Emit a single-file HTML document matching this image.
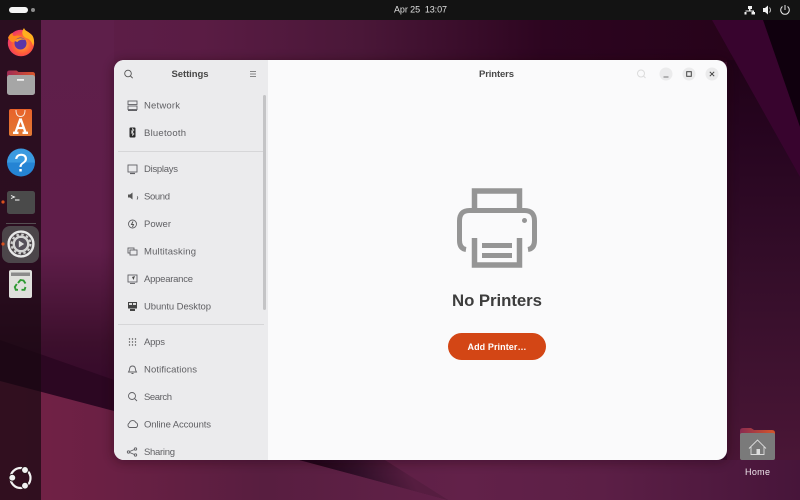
<!DOCTYPE html>
<html><head><meta charset="utf-8"><style>
html,body{margin:0;padding:0;width:800px;height:500px;overflow:hidden;background:#000}
svg{display:block;filter:blur(.3px)}
text{font-family:"Liberation Sans",sans-serif}
.r{font-size:9.5px;fill:#606064}
.i{fill:none;stroke:#606064;stroke-width:.9}
</style></head><body>
<svg width="800" height="500" viewBox="0 0 800 500" xmlns="http://www.w3.org/2000/svg">
<defs>
<linearGradient id="top" x1="0" x2="800" y1="0" y2="0" gradientUnits="userSpaceOnUse"><stop offset="0" stop-color="#5e1f4a"/><stop offset=".25" stop-color="#5a1c44"/><stop offset=".45" stop-color="#4a1738"/><stop offset=".68" stop-color="#2d0520"/><stop offset="1" stop-color="#240218"/></linearGradient>
<linearGradient id="left" x1="0" x2="0" y1="20" y2="400" gradientUnits="userSpaceOnUse"><stop offset="0" stop-color="#5e1f4a"/><stop offset=".6" stop-color="#601e4a"/><stop offset=".85" stop-color="#3c0f2c"/><stop offset="1" stop-color="#33082a"/></linearGradient>
<linearGradient id="right" x1="0" x2="0" y1="60" y2="460" gradientUnits="userSpaceOnUse"><stop offset="0" stop-color="#200218"/><stop offset=".2" stop-color="#270520"/><stop offset=".55" stop-color="#350e2a"/><stop offset="1" stop-color="#4a1636"/></linearGradient>
<linearGradient id="low" x1="0" x2="800" y1="0" y2="0" gradientUnits="userSpaceOnUse"><stop offset="0" stop-color="#742246"/><stop offset=".14" stop-color="#6a2044"/><stop offset=".33" stop-color="#581e40"/><stop offset=".58" stop-color="#622149"/><stop offset=".75" stop-color="#5c1f46"/><stop offset="1" stop-color="#47153a"/></linearGradient>
<linearGradient id="wedge" x1="330" x2="400" y1="490" y2="455" gradientUnits="userSpaceOnUse"><stop offset="0" stop-color="#22051a"/><stop offset=".45" stop-color="#33102a"/><stop offset="1" stop-color="#561d40"/></linearGradient>
<radialGradient id="ff" cx=".55" cy=".55" r=".6"><stop offset="0" stop-color="#ffb02e"/><stop offset=".6" stop-color="#ff5a3a"/><stop offset="1" stop-color="#e92f78"/></radialGradient>
<linearGradient id="fold" x1="0" x2="1" y1="0" y2="0"><stop offset="0" stop-color="#a02a55"/><stop offset="1" stop-color="#d9562c"/></linearGradient>
<linearGradient id="foldh" x1="0" x2="1" y1="0" y2="0"><stop offset="0" stop-color="#8a2a50"/><stop offset="1" stop-color="#d5562b"/></linearGradient>
<linearGradient id="help" x1="0" x2="0" y1="0" y2="1"><stop offset="0" stop-color="#3a9ae0"/><stop offset=".5" stop-color="#3a9ae0"/><stop offset=".5" stop-color="#2584d4"/><stop offset="1" stop-color="#2584d4"/></linearGradient>
<linearGradient id="store" x1="0" x2="0" y1="0" y2="1"><stop offset="0" stop-color="#e8622a"/><stop offset="1" stop-color="#e27a35"/></linearGradient>
<filter id="sh" x="-10%" y="-10%" width="120%" height="120%"><feGaussianBlur stdDeviation="5"/></filter>
<clipPath id="win"><rect x="114" y="60" width="613" height="400" rx="10"/></clipPath>
</defs>

<!-- wallpaper -->
<rect width="800" height="500" fill="#3a0e2c"/>
<rect x="0" y="20" width="120" height="400" fill="url(#left)"/>
<rect x="114" y="20" width="686" height="42" fill="url(#top)"/>
<rect x="0" y="20" width="114" height="42" fill="url(#left)"/>
<rect x="727" y="60" width="73" height="400" fill="url(#right)"/>
<polygon points="763,20 800,20 800,127" fill="#10000e"/>
<polygon points="712,20 763,20 800,127 800,177" fill="#38042e"/>
<polygon points="0,340 114,380 448,500 0,500" fill="#2c0722"/>
<polygon points="0,381 114,411 300,460 448,500 0,500" fill="url(#low)"/>
<polygon points="448,500 300,460 800,460 800,500" fill="url(#low)"/>
<polygon points="299,460 385,460 448,500" fill="url(#wedge)"/>

<!-- dock -->
<rect x="0" y="20" width="41" height="480" fill="#170811" fill-opacity=".72"/>
<rect x="2" y="226" width="37" height="37" rx="8" fill="#4c464a"/>
<rect x="6" y="223" width="30" height="1" fill="#554e52"/>
<circle cx="3" cy="202" r="1.6" fill="#d9501e"/>
<circle cx="3" cy="244" r="1.6" fill="#d9501e"/>

<!-- firefox -->
<circle cx="21" cy="43" r="13.2" fill="url(#ff)"/>
<path d="M24 28c1 3 5 4 8 7 3 4 2 9 1 11-1-4-3-7-7-8-4-2-5-6-2-10z" fill="#ffb01f"/>
<path d="M8 38c1-3 3-5 5-5-1 2 0 3 2 3 3-1 6 0 8 2-4-1-8 1-9 4-2 1-4-1-6-4z" fill="#ff8a1e"/>
<circle cx="20.500" cy="43.500" r="6" fill="#5b35a8"/>
<path d="M14.500 41c2-3 8-4 11-1-3-1-7 0-8 2z" fill="#ff9a28"/>

<!-- files -->
<path d="M7 73q0-2.500 2.500-2.500h7l2 1.500h14q2.500 0 2.500 2.500v3H7z" fill="url(#fold)"/>
<rect x="7" y="75" width="28" height="20" rx="2.500" fill="#a6a6a6"/>
<rect x="17" y="79" width="7" height="1.800" fill="#efefef"/>

<!-- store -->
<rect x="9" y="109" width="23" height="27" rx="2" fill="url(#store)"/>
<path d="M16 110c0 5 2 6.500 4.500 6.500S25 115 25 110" fill="none" stroke="#f8e5da" stroke-width="1"/>
<path d="M20.500 118.500l-5 14M20.500 118.500l5 14M16.500 128h8M13 132.800h5.500M22.500 132.800h5.500" fill="none" stroke="#fff" stroke-width="2.300"/>

<!-- help -->
<circle cx="21" cy="162.500" r="14" fill="url(#help)"/>
<text x="21" y="171.500" font-size="25" fill="#fff" text-anchor="middle">?</text>

<!-- terminal -->
<rect x="7" y="191" width="28" height="23" rx="2.500" fill="#4a4a4a"/>
<path d="M11 195.500l3.500 1.500-3.500 1.500" fill="none" stroke="#fff" stroke-width=".9"/>
<rect x="15" y="199.500" width="4.500" height="1" fill="#fff"/>

<!-- gear -->
<circle cx="21" cy="244" r="12.400" fill="none" stroke="#e8e8e8" stroke-width="2.400"/>
<circle cx="21" cy="244" r="9.500" fill="none" stroke="#cfcfcf" stroke-width="2" stroke-dasharray="2.500 2.470"/>
<circle cx="21" cy="244" r="7.200" fill="none" stroke="#d4d4d4" stroke-width="2.500"/>
<circle cx="21" cy="244" r="6" fill="#55505a"/>
<path d="M18.800 240.500l5.400 3.500-5.400 3.500z" fill="#dcdcdc"/>

<!-- trash -->
<rect x="9" y="270" width="23" height="28" rx="2" fill="#dfe0dc"/>
<rect x="11" y="272.500" width="19" height="3.500" fill="#8b8b8b"/>
<path d="M18 283l2.500-3 3 .5 2 3M25.500 287l-1 2.800h-3M18 289.800h-2.200l-1-2.800 2-3" fill="none" stroke="#2f9a32" stroke-width="1.900"/>

<!-- ubuntu logo -->
<circle cx="20.500" cy="478" r="10" fill="none" stroke="#f2f2f2" stroke-width="2.200"/>
<circle cx="25" cy="470" r="3.400" fill="#f2f2f2" stroke="#261219" stroke-width=".9"/>
<circle cx="12.300" cy="477.700" r="3.400" fill="#f2f2f2" stroke="#261219" stroke-width=".9"/>
<circle cx="25" cy="485.700" r="3.400" fill="#f2f2f2" stroke="#261219" stroke-width=".9"/>

<!-- top bar -->
<rect width="800" height="20" fill="#131313"/>
<rect x="9" y="7" width="19" height="6" rx="3" fill="#f5f5f5"/>
<circle cx="33" cy="10" r="2" fill="#8c8c8c"/>
<text x="420.500" y="12.500" font-size="9" fill="#e0e0e0" text-anchor="middle" textLength="53">Apr 25&#160;&#160;13:07</text>
<path d="M748 6h4v3h-1.500v1.500h3.500v1.500h1v2.500h-3.500V12h1v-.5h-7v.5h1v2.500H744.500V12h1v-1.500h3.500V9H748z" fill="#f0f0f0"/>
<path d="M763 8h2l3-2.500v9L765 12h-2z" fill="#f0f0f0"/><path d="M769.500 7.500q2 2.500 0 5" fill="none" stroke="#c0c0c0" stroke-width="1"/>
<path d="M782.500 6.500a4.300 4.300 0 1 0 5 0" fill="none" stroke="#e6e6e6" stroke-width="1"/><path d="M785 5v5" stroke="#e6e6e6" stroke-width="1"/>

<!-- window -->
<rect x="112" y="60" width="617" height="403" rx="12" fill="#1a0010" opacity=".35" filter="url(#sh)"/>
<g clip-path="url(#win)">
<rect x="114" y="60" width="613" height="400" fill="#fafafb"/>
<rect x="114" y="60" width="154" height="400" fill="#ebebed"/>
</g>

<!-- sidebar header -->
<circle cx="128" cy="73.500" r="3.300" fill="none" stroke="#555" stroke-width=".9"/><path d="M130.500 76l2.200 2.200" stroke="#555" stroke-width=".9"/>
<text x="190" y="77.200" font-size="9.500" font-weight="bold" fill="#484848" text-anchor="middle" textLength="37">Settings</text>
<path d="M250 71.500h6M250 74h6M250 76.500h6" stroke="#666" stroke-width=".8"/>

<!-- sidebar rows -->
<text class="r" x="144" y="108.500" textLength="36">Network</text>
<text class="r" x="144" y="136" textLength="42">Bluetooth</text>
<text class="r" x="144" y="172" textLength="34">Displays</text>
<text class="r" x="144" y="199.500" textLength="26">Sound</text>
<text class="r" x="144" y="227" textLength="27">Power</text>
<text class="r" x="144" y="254.500" textLength="52">Multitasking</text>
<text class="r" x="144" y="282" textLength="49">Appearance</text>
<text class="r" x="144" y="309.500" textLength="67">Ubuntu Desktop</text>
<text class="r" x="144" y="345" textLength="21">Apps</text>
<text class="r" x="144" y="372.500" textLength="53">Notifications</text>
<text class="r" x="144" y="400" textLength="28">Search</text>
<text class="r" x="144" y="427.500" textLength="67">Online Accounts</text>
<text class="r" x="144" y="455" textLength="31">Sharing</text>
<rect x="118" y="151" width="146" height="1" fill="#d6d6d8"/>
<rect x="118" y="324" width="146" height="1" fill="#d6d6d8"/>
<rect x="263" y="95" width="3" height="215" rx="1.500" fill="#c4c4c6"/>

<!-- sidebar icons -->
<g class="i">
<rect x="128" y="101" width="9" height="3.500"/><rect x="128" y="106" width="9" height="3.500"/><path d="M132.500 109.500v1M128 110.500h9"/>
<rect x="128" y="165" width="9" height="7"/><path d="M130 173.500h5" stroke-width="1.200"/>
<path d="M137 196.500q1.500 .5 0 3"/>
<circle cx="132.500" cy="224" r="4"/>
<rect x="128" y="248" width="6" height="5"/><rect x="130" y="250" width="7" height="5" fill="#ebebed"/>
<rect x="128" y="275" width="9" height="7"/><path d="M130 283.500h5"/>
<path d="M132.500 366c-2.500 0-3 2-3 4l-1 2h8l-1-2c0-2-.5-4-3-4zM131.500 373.500h2"/>
<circle cx="132" cy="396" r="3.500"/><path d="M134.500 398.500l2.500 2.500"/>
<path d="M129.500 427.500a2.500 2.500 0 0 1 -.2-4.500 3.500 3.500 0 0 1 6.500-.5 2.800 2.800 0 0 1 .5 5z"/>
<circle cx="128.500" cy="452" r="1.200"/><circle cx="135.500" cy="449" r="1.200"/><circle cx="135.500" cy="455" r="1.200"/><path d="M129.600 451.500l4.800-2M129.600 452.500l4.800 2"/>
</g>
<rect x="129.500" y="127.500" width="6" height="10" rx="1" fill="#2a2a2a"/><path d="M131 130.500l3 3.500-1.500 1.500v-7l1.500 1.500-3 3.500" fill="none" stroke="#eee" stroke-width=".6"/>
<path d="M128 194.500h2l2.500-2v7l-2.500-2h-2z" fill="#555"/>
<path d="M133 221.500l-1.500 3h2l-1 2.500" fill="none" stroke="#555" stroke-width="1"/>
<path d="M132 277l3-1-1.500 4z" fill="#444"/>
<rect x="128" y="302" width="9" height="6.500" fill="#444"/><rect x="129" y="303" width="3" height="2" fill="#ddd"/><rect x="133" y="303" width="3" height="2" fill="#ddd"/><rect x="130" y="309" width="5" height="2" fill="#444"/>
<g fill="#555"><circle cx="129.500" cy="339" r=".7"/><circle cx="132.500" cy="339" r=".7"/><circle cx="135.500" cy="339" r=".7"/><circle cx="129.500" cy="342" r=".7"/><circle cx="132.500" cy="342" r=".7"/><circle cx="135.500" cy="342" r=".7"/><circle cx="129.500" cy="345" r=".7"/><circle cx="132.500" cy="345" r=".7"/><circle cx="135.500" cy="345" r=".7"/></g>

<!-- content header -->
<text x="496.500" y="77.200" font-size="9.500" font-weight="bold" fill="#484848" text-anchor="middle" textLength="35">Printers</text>
<circle cx="641" cy="73.500" r="3.500" fill="none" stroke="#dcdcdc" stroke-width="1"/><path d="M643.500 76l2 2" stroke="#dcdcdc"/>
<circle cx="666" cy="74" r="6.500" fill="#ebebec"/><circle cx="689" cy="74" r="6.500" fill="#ebebec"/><circle cx="712" cy="74" r="6.500" fill="#ebebec"/>
<rect x="663.500" y="76.500" width="5" height="1" fill="#777"/>
<rect x="686.700" y="71.700" width="4.600" height="4.600" fill="none" stroke="#444" stroke-width="1"/>
<path d="M709.800 71.800l4.400 4.400M714.200 71.800l-4.400 4.400" stroke="#444" stroke-width="1"/>

<!-- printer -->
<g fill="none" stroke="#959595">
<path d="M474.500 208V191h45v17" stroke-width="5.500"/>
<path d="M466 249.500q-6.500-1-6.500-9V221q0-10.500 10-10.500h55q10 0 10 10.500v19.500q0 8-6.500 9" stroke-width="5"/>
<path d="M474.500 238v27h45v-27" stroke-width="5.500"/>
</g>
<circle cx="524.500" cy="220.500" r="2.500" fill="#959595"/>
<rect x="482" y="243" width="30" height="5" fill="#959595"/>
<rect x="482" y="253" width="30" height="5" fill="#959595"/>

<text x="497" y="306" font-size="16.800" font-weight="bold" fill="#3d3d3d" text-anchor="middle" textLength="90">No Printers</text>
<rect x="448" y="333" width="98" height="27" rx="13.500" fill="#d34615"/>
<text x="497" y="350" font-size="9" font-weight="bold" fill="#fff" text-anchor="middle" textLength="59">Add Printer…</text>

<!-- home -->
<path d="M740 431q0-3 3-3h8l3 2h18q3 0 3 3v5h-35z" fill="url(#foldh)"/>
<rect x="740" y="433" width="35" height="27" rx="2" fill="#7a7a7a"/>
<path d="M751 447v7.500h13V447M749 448.500l8.500-8.500 8.500 8.500" fill="none" stroke="#dcdcdc" stroke-width=".9"/>
<rect x="756.500" y="449" width="3.500" height="5.500" fill="#dcdcdc"/>
<text x="757.500" y="475" font-size="9" fill="#f0e8ee" text-anchor="middle" textLength="25">Home</text>
</svg>
</body></html>
